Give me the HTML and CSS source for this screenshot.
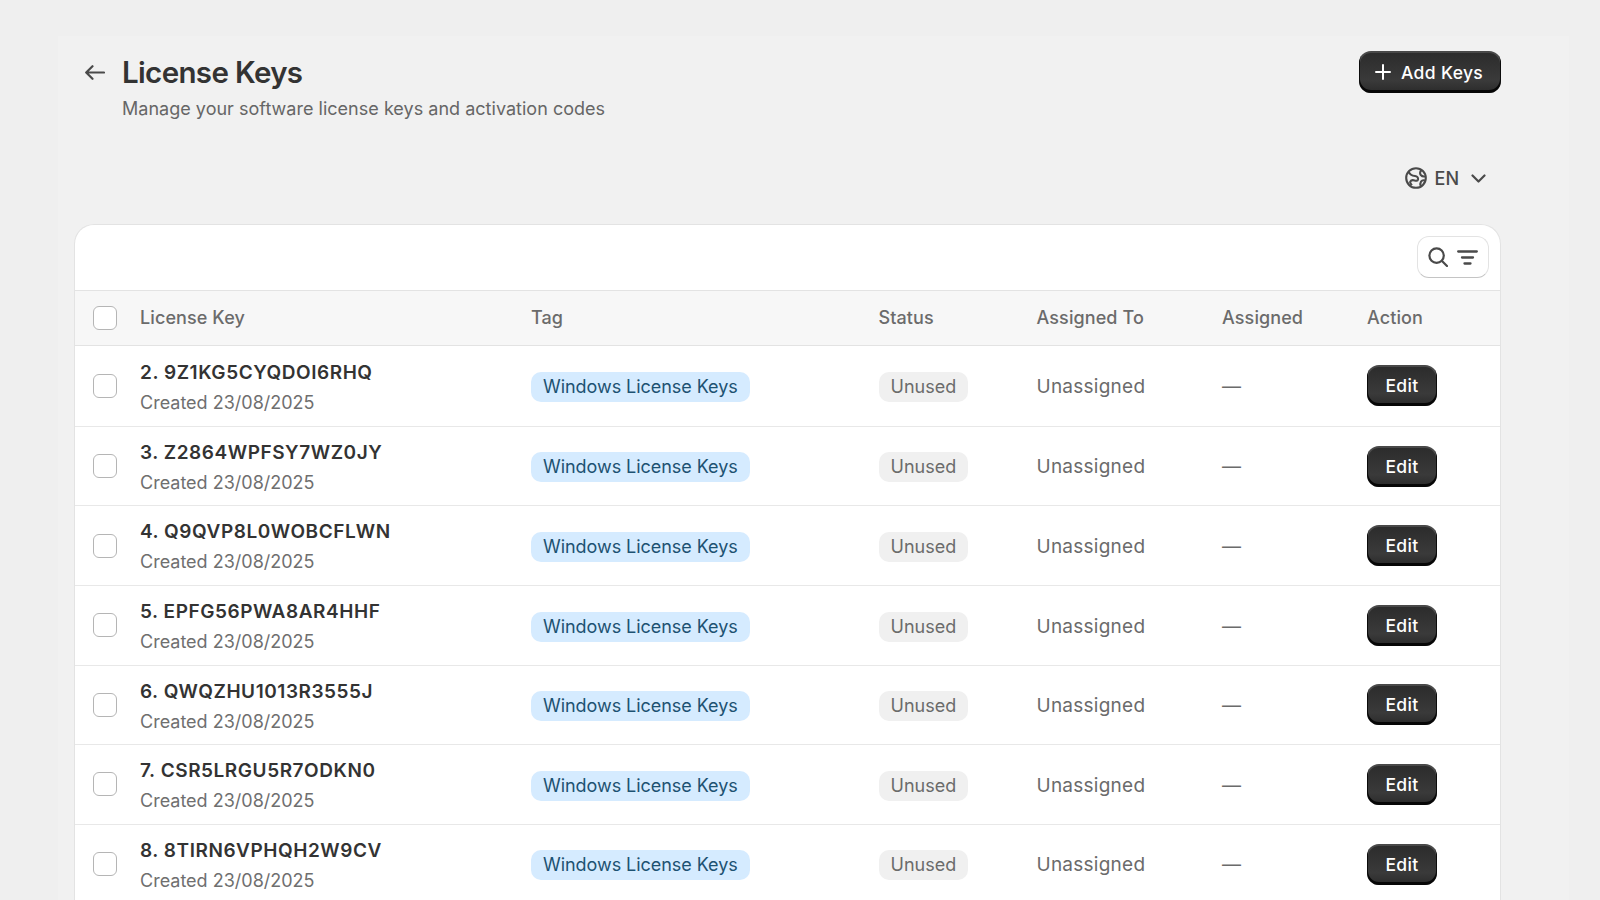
FILE: index.html
```html
<!DOCTYPE html>
<html lang="en">
<head>
    <meta charset="UTF-8">
    <meta name="viewport" content="width=device-width, initial-scale=1.0">
    <title>License Keys</title>
    <link rel="stylesheet" href="styles.css">
</head>
<body>
    <div class="page">
        <!-- Page header -->
        <div class="page-header">
            <div class="title-group">
                <svg class="back-icon" viewBox="0 0 20 15" fill="none" stroke="currentColor" stroke-width="2.2" stroke-linecap="round" stroke-linejoin="round">
                    <path d="M19 7.5H1.5M7.5 1.2L1.2 7.5l6.3 6.3"/>
                </svg>
                <div>
                    <h1>License Keys</h1>
                    <p class="subtitle">Manage your software license keys and activation codes</p>
                </div>
            </div>
            <button class="btn btn-add">
                <svg class="plus-icon" viewBox="0 0 16 16" fill="none" stroke="currentColor" stroke-width="2" stroke-linecap="round">
                    <path d="M8 1v14M1 8h14"/>
                </svg>
                Add Keys
            </button>
        </div>

        <!-- Language selector -->
        <div class="lang-row">
            <div class="lang">
                <svg class="globe-icon" viewBox="0 0 22 22" fill="none" stroke="currentColor" stroke-width="2.1" stroke-linejoin="round">
                    <circle cx="11" cy="11" r="9.8"/>
                    <path d="M3.6 4.6c1.2 3 3.6 4.2 6.4 4.4 2.2.2 3.4 1.6 3 3.4-.4 1.6-2 1.4-3.4 1-1.8-.5-3.6-.2-4.4 1.4-.5 1 .8 2 1.6 3.4"/>
                    <path d="M16.4 2.8c-1.4 1.8-1.8 3.6-.6 5.2 1 1.2 3 1.8 5 1.2"/>
                    <path d="M20.6 13.8c-1.8-.8-3.6-.6-4.6.8-.9 1.3-.9 3-.1 4.9"/>
                </svg>
                <span>EN</span>
                <svg class="chevron-icon" viewBox="0 0 15 9" fill="none" stroke="currentColor" stroke-width="2.2" stroke-linecap="round" stroke-linejoin="round">
                    <path d="M1.5 1.5l6 6 6-6"/>
                </svg>
            </div>
        </div>

        <!-- Keys table -->
        <div class="card">
            <div class="toolbar">
                <div class="search-filter">
                    <svg class="search-icon" viewBox="0 0 20 20" fill="none" stroke="currentColor" stroke-width="2.2" stroke-linecap="round">
                        <circle cx="8.6" cy="8.6" r="7.2"/>
                        <path d="M14 14l5 5"/>
                    </svg>
                    <svg class="filter-icon" viewBox="0 0 21 15" fill="none" stroke="currentColor" stroke-width="2.3" stroke-linecap="round">
                        <path d="M1.2 1.5h18.6M5 7.5h11M7.5 13.5h6"/>
                    </svg>
                </div>
            </div>

            <div class="row head-row">
                <div class="cell-check"><span class="checkbox"></span></div>
                <div>License Key</div>
                <div>Tag</div>
                <div>Status</div>
                <div>Assigned To</div>
                <div>Assigned</div>
                <div>Action</div>
            </div>

            <div class="row">
                <div class="cell-check"><span class="checkbox"></span></div>
                <div class="cell-key"><div class="key-name">2. 9Z1KG5CYQDOI6RHQ</div><div class="key-date">Created 23/08/2025</div></div>
                <div class="cell-badge"><span class="badge badge-tag">Windows License Keys</span></div>
                <div class="cell-badge"><span class="badge badge-status">Unused</span></div>
                <div class="cell-text">Unassigned</div>
                <div class="cell-text dash">—</div>
                <div><button class="btn btn-edit">Edit</button></div>
            </div>
            <div class="row">
                <div class="cell-check"><span class="checkbox"></span></div>
                <div class="cell-key"><div class="key-name">3. Z2864WPFSY7WZ0JY</div><div class="key-date">Created 23/08/2025</div></div>
                <div class="cell-badge"><span class="badge badge-tag">Windows License Keys</span></div>
                <div class="cell-badge"><span class="badge badge-status">Unused</span></div>
                <div class="cell-text">Unassigned</div>
                <div class="cell-text dash">—</div>
                <div><button class="btn btn-edit">Edit</button></div>
            </div>
            <div class="row">
                <div class="cell-check"><span class="checkbox"></span></div>
                <div class="cell-key"><div class="key-name">4. Q9QVP8L0WOBCFLWN</div><div class="key-date">Created 23/08/2025</div></div>
                <div class="cell-badge"><span class="badge badge-tag">Windows License Keys</span></div>
                <div class="cell-badge"><span class="badge badge-status">Unused</span></div>
                <div class="cell-text">Unassigned</div>
                <div class="cell-text dash">—</div>
                <div><button class="btn btn-edit">Edit</button></div>
            </div>
            <div class="row">
                <div class="cell-check"><span class="checkbox"></span></div>
                <div class="cell-key"><div class="key-name">5. EPFG56PWA8AR4HHF</div><div class="key-date">Created 23/08/2025</div></div>
                <div class="cell-badge"><span class="badge badge-tag">Windows License Keys</span></div>
                <div class="cell-badge"><span class="badge badge-status">Unused</span></div>
                <div class="cell-text">Unassigned</div>
                <div class="cell-text dash">—</div>
                <div><button class="btn btn-edit">Edit</button></div>
            </div>
            <div class="row">
                <div class="cell-check"><span class="checkbox"></span></div>
                <div class="cell-key"><div class="key-name">6. QWQZHU1013R3555J</div><div class="key-date">Created 23/08/2025</div></div>
                <div class="cell-badge"><span class="badge badge-tag">Windows License Keys</span></div>
                <div class="cell-badge"><span class="badge badge-status">Unused</span></div>
                <div class="cell-text">Unassigned</div>
                <div class="cell-text dash">—</div>
                <div><button class="btn btn-edit">Edit</button></div>
            </div>
            <div class="row">
                <div class="cell-check"><span class="checkbox"></span></div>
                <div class="cell-key"><div class="key-name">7. CSR5LRGU5R7ODKN0</div><div class="key-date">Created 23/08/2025</div></div>
                <div class="cell-badge"><span class="badge badge-tag">Windows License Keys</span></div>
                <div class="cell-badge"><span class="badge badge-status">Unused</span></div>
                <div class="cell-text">Unassigned</div>
                <div class="cell-text dash">—</div>
                <div><button class="btn btn-edit">Edit</button></div>
            </div>
            <div class="row">
                <div class="cell-check"><span class="checkbox"></span></div>
                <div class="cell-key"><div class="key-name">8. 8TIRN6VPHQH2W9CV</div><div class="key-date">Created 23/08/2025</div></div>
                <div class="cell-badge"><span class="badge badge-tag">Windows License Keys</span></div>
                <div class="cell-badge"><span class="badge badge-status">Unused</span></div>
                <div class="cell-text">Unassigned</div>
                <div class="cell-text dash">—</div>
                <div><button class="btn btn-edit">Edit</button></div>
            </div>
        </div>
    </div>
</body>
</html>
```

FILE: styles.css
```css
* {
    margin: 0;
    padding: 0;
    box-sizing: border-box;
}

html, body {
    height: 900px;
    overflow: hidden;
}

body {
    background-color: #efefef;
    font-family: Inter, 'Liberation Sans', sans-serif;
    font-size: 18px;
    color: #616161;
}

.page {
    margin: 36px 0 0 58px;
    width: 1511px;
    height: 864px;
    padding: 15px 68px 0 16px;
    background-color: #f1f1f1;
}

/* Header */
.page-header {
    display: flex;
    justify-content: space-between;
    align-items: flex-start;
}

.title-group {
    display: flex;
    align-items: flex-start;
    gap: 17px;
    padding-left: 11px;
}

.back-icon {
    width: 20px;
    height: 15px;
    margin-top: 14px;
    color: #4a4a4a;
}

h1 {
    font-size: 29.5px;
    line-height: 42px;
    font-weight: 600;
    letter-spacing: -0.65px;
    color: #333;
}

.subtitle {
    margin-top: 4px;
    font-size: 18px;
    line-height: 24px;
    letter-spacing: 0.02px;
    color: #666;
}

.btn {
    border: none;
    color: #fff;
    font-family: inherit;
    font-weight: 500;
    font-size: 17.5px;
    letter-spacing: 0.35px;
    background: linear-gradient(#2b2b2b, #3a3a3a 70%, #2a2a2a);
    box-shadow: inset 0 -2px 0 1px rgba(0, 0, 0, 0.85), inset 0 1px 0 1px rgba(255, 255, 255, 0.14);
    cursor: pointer;
}

.btn-add {
    display: flex;
    align-items: center;
    gap: 10px;
    width: 142px;
    height: 42px;
    padding-left: 16px;
    border-radius: 12px;
}

.plus-icon {
    width: 16px;
    height: 16px;
}

/* Language */
.lang-row {
    display: flex;
    justify-content: flex-end;
    margin-top: 45px;
    padding-right: 15px;
}

.lang {
    display: flex;
    align-items: center;
    color: #4a4a4a;
    font-weight: 500;
    height: 24px;
}

.globe-icon {
    width: 22px;
    height: 22px;
    margin-right: 8px;
}

.chevron-icon {
    width: 15px;
    height: 9px;
    margin-left: 12px;
}

/* Card */
.card {
    margin-top: 34px;
    background-color: #fff;
    border: 1px solid #e3e3e3;
    border-bottom: none;
    border-radius: 20px 20px 0 0;
}

.toolbar {
    display: flex;
    justify-content: flex-end;
    height: 65.2px;
    padding: 11px 11px 0 0;
}

.search-filter {
    display: flex;
    align-items: center;
    gap: 9px;
    width: 72px;
    height: 42px;
    padding-left: 10px;
    border: 1px solid #e3e3e3;
    border-bottom-color: #c4c4c4;
    border-radius: 12px;
    color: #4a4a4a;
}

.search-icon {
    width: 20px;
    height: 20px;
}

.filter-icon {
    width: 21px;
    height: 15px;
}

/* Rows */
.row {
    display: grid;
    grid-template-columns: 65px 391px 347.5px 158px 185.5px 145px 1fr;
    align-items: center;
    height: 79.6px;
    border-top: 1px solid #e8e8e8;
    line-height: 24px;
}

.head-row {
    height: 56px;
    background-color: #f7f7f7;
    font-weight: 500;
    letter-spacing: 0.1px;
    color: #6b6b6b;
    border-bottom: 1px solid #e3e3e3;
    border-top-color: #e3e3e3;
}

.head-row + .row {
    border-top: none;
}

.cell-check {
    padding-left: 18px;
}

.checkbox {
    display: block;
    width: 24px;
    height: 24px;
    background-color: #fff;
    border: 1.5px solid #b5b5b5;
    border-radius: 6px;
}

.cell-key, .cell-badge, .cell-text {
    position: relative;
    top: 1.3px;
}

.key-name {
    font-size: 19px;
    font-weight: 600;
    letter-spacing: 0.55px;
    color: #333;
    line-height: 26px;
}

.key-date {
    margin-top: 5px;
    line-height: 24px;
    color: #6f6f6f;
}

.cell-text {
    font-size: 19px;
    letter-spacing: 0.25px;
    color: #6b6b6b;
}

.badge {
    display: inline-block;
    height: 30px;
    line-height: 30px;
    padding: 0 12px;
    border-radius: 10px;
}

.badge-tag {
    background-color: #d5ebff;
    color: #1d5272;
    letter-spacing: -0.05px;
}

.badge-status {
    background-color: #f0f0f0;
    color: #6b6b6b;
}

.btn-edit {
    display: block;
    width: 70px;
    height: 41px;
    border-radius: 12px;
}
```
